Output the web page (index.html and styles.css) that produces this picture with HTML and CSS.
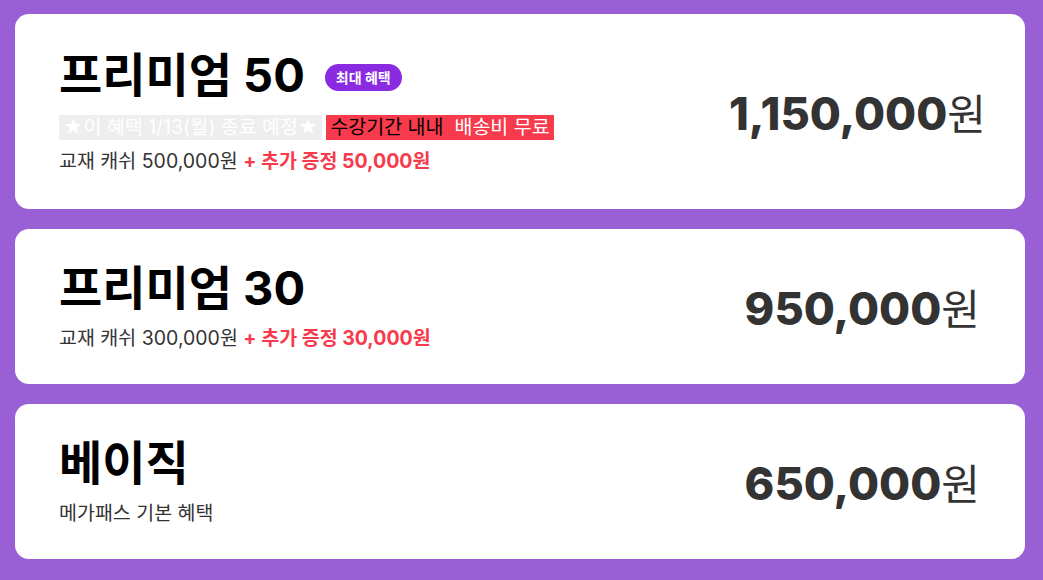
FILE: index.html
```html
<!DOCTYPE html>
<html lang="ko">
<head>
<meta charset="utf-8">
<title>수강 상품</title>
<link rel="stylesheet" href="styles.css">
</head>
<body>
<div class="plans">
  <div class="plan plan-top">
    <div class="info">
      <div class="name">프리미엄 50 <span class="badge">최대 혜택</span></div>
      <div class="promo"><span class="promo-end">★이 혜택 1/13(월) 종료 예정★</span><span class="promo-red"><span class="dark">수강기간 내내</span>&nbsp; 배송비 무료</span></div>
      <div class="desc">교재 캐쉬 500,000원 <b>+ 추가 증정 50,000원</b></div>
    </div>
    <div class="price">1,150,000<span>원</span></div>
  </div>
  <div class="plan">
    <div class="info">
      <div class="name">프리미엄 30</div>
      <div class="desc">교재 캐쉬 300,000원 <b>+ 추가 증정 30,000원</b></div>
    </div>
    <div class="price">950,000<span>원</span></div>
  </div>
  <div class="plan">
    <div class="info">
      <div class="name">베이직</div>
      <div class="desc">메가패스 기본 혜택</div>
    </div>
    <div class="price">650,000<span>원</span></div>
  </div>
</div>
</body>
</html>
```
FILE: styles.css
```css
body{
  margin: 0;
  background-color: #9960d6;
  font-family: "Inter", "Noto Sans CJK KR", sans-serif;
  color: #333;
}
.plans{
  display: flex;
  flex-direction: column;
  gap: 20px;
  padding: 14px 18px 21px 15px;
}
.plan{
  display: flex;
  align-items: center;
  justify-content: space-between;
  height: 155px;
  box-sizing: border-box;
  background: white;
  border-radius: 14px;
  padding: 0 45px 0 44px;
}
.plan .info{
  padding-bottom: 4px;
}
.plan-top{
  height: 195px;
  padding-right: 39px;
}
.plan-top .info{
  padding-bottom: 3px;
}
.name{
  display: flex;
  align-items: center;
  font-size: 47px;
  font-weight: 700;
  color: #000;
  line-height: 58px;
}
.badge{
  margin-left: 20px;
  margin-top: 4px;
  background: #8a2be2;
  color: white;
  font-size: 14px;
  font-weight: 700;
  line-height: 27px;
  padding: 0 11px;
  border-radius: 14px;
}
.promo{
  margin-top: 11px;
  display: flex;
  font-size: 19.5px;
  line-height: 25px;
}
.promo-end{
  background: #eeeeee;
  color: white;
  padding: 0 4px;
}
.promo-red{
  background: #f83a4d;
  color: white;
  padding: 0 4px;
  margin-left: 4px;
}
.dark{
  color: #000;
}
.desc{
  margin-top: 8px;
  font-size: 19.5px;
  line-height: 26px;
  color: #333;
}
.desc b{
  color: #f83a4d;
  font-weight: 700;
}
.price{
  font-size: 45px;
  font-weight: 800;
  color: #333;
}
.price span{
  font-size: 42px;
  font-weight: 400;
}
```
